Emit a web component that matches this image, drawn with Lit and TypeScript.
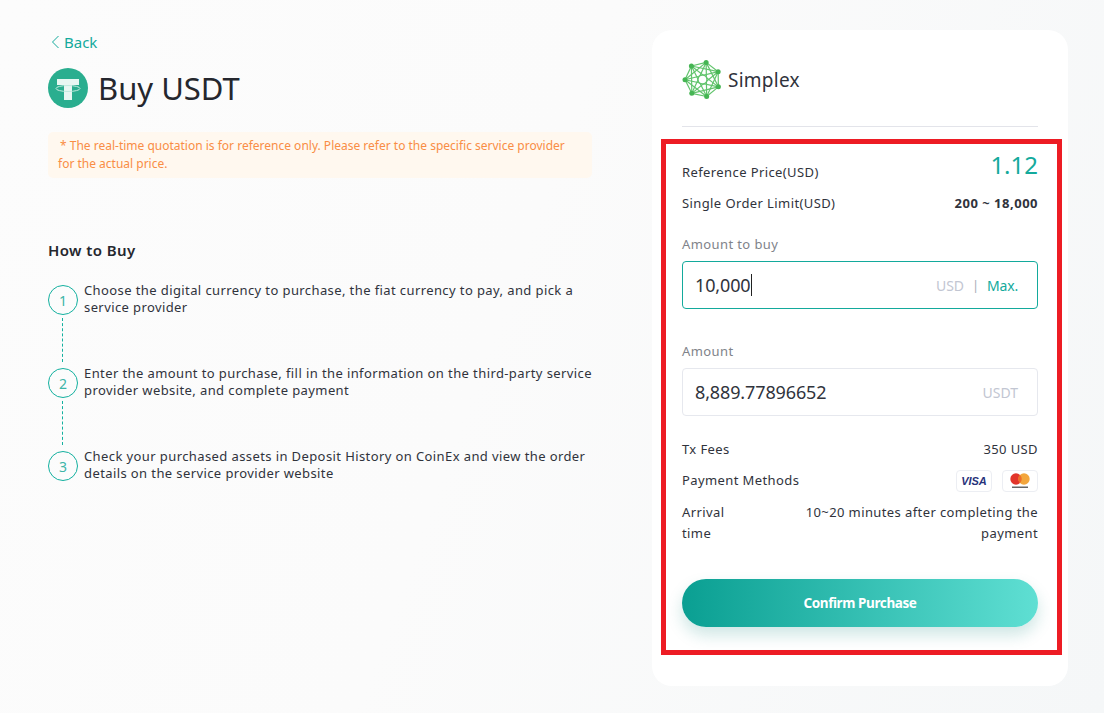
import { LitElement, html, css, svg } from "lit";
import { customElement } from "lit/decorators.js";

const pts: [number, number][] = [];
for (let i = 0; i < 7; i++) {
  const a = (-78 + i * (360 / 7)) * Math.PI / 180;
  pts.push([20 + 17.5 * Math.cos(a), 20.5 + 17.5 * Math.sin(a)]);
}

@customElement("app-root")
export class AppRoot extends LitElement {
  static styles = css`
    :host { display: block; width: 1104px; height: 713px; overflow: hidden; font-family: "Noto Sans", "Open Sans", sans-serif; color: #30333c; background: linear-gradient(110deg, #fcfcfc 0%, #fbfbfb 45%, #f5f7f8 100%); font-size: 13px; letter-spacing: .4px; }
    .page { display: flex; align-items: flex-start; padding: 30px 36px 0 48px; gap: 60px; }
    .left { width: 544px; }
    .back { display: flex; align-items: center; gap: 4px; padding: 2px 0 0 3px; height: 20px; color: #13aa9c; font-size: 15px; letter-spacing: 0; }
    .title { display: flex; align-items: center; gap: 10px; margin-top: 16px; height: 40px; font-size: 31px; letter-spacing: 0; color: #25272e; }
    .notice { margin-top: 24px; padding: 5px 10px; height: 46px; box-sizing: border-box; border-radius: 5px; background: #fff8ef; color: #f98d45; font-size: 12px; line-height: 18px; letter-spacing: 0; text-indent: 2px; }
    h2 { margin: 62px 0 0; font-size: 15px; font-weight: 600; line-height: 20px; color: #25272e; }
    .steps { margin-top: 22px; }
    .step { display: flex; gap: 6px; height: 83px; position: relative; line-height: 17px; }
    .step:last-child { height: auto; }
    .num { flex: none; margin-top: 3px; width: 30px; height: 30px; box-sizing: border-box; border: 1px solid #13b09f; border-radius: 50%; color: #3db5a8; display: flex; align-items: center; justify-content: center; font-size: 14px; letter-spacing: 0; }
    .line { position: absolute; left: 14px; top: 36px; height: 44px; border-left: 1px dashed #13b09f; }
    .card { width: 416px; height: 656px; box-sizing: border-box; background: #fff; border-radius: 20px; padding: 0 30px; position: relative; }
    .brand { display: flex; align-items: center; gap: 5px; height: 97px; padding-top: 3px; box-sizing: border-box; border-bottom: 1px solid #e3e4ea; font-size: 19px; letter-spacing: .25px; }
    .row { display: flex; justify-content: space-between; align-items: center; }
    .price { margin-top: 23px; height: 30px; align-items: flex-end; }
    .price .ref { position: relative; top: 1px; }
    .big { color: #13aa9c; font-size: 24px; line-height: 30px; letter-spacing: 0; }
    .limit { height: 26px; margin-top: 10px; }
    .limit b { font-weight: 700; letter-spacing: .5px; }
    .label { color: #80838a; margin-top: 19px; line-height: 18px; }
    .field { margin-top: 8px; height: 48px; box-sizing: border-box; border: 1px solid #e6e8ee; border-radius: 4px; display: flex; align-items: center; padding: 0 19px 0 12px; font-size: 18px; letter-spacing: -0.13px; }
    .field.on { border-color: #13aa9c; }
    .caret { width: 1px; height: 22px; background: #222; }
    .grow { flex: 1; }
    .unit { color: #c2c6d2; font-size: 14px; letter-spacing: -0.02px; }
    .sep { color: #a9adb8; margin: 0 8px 0 8px; font-size: 13px; }
    .max { color: #13aa9c; font-size: 14px; letter-spacing: -0.2px; }
    .label.second { margin-top: 33px; }
    .fees { margin-top: 24px; height: 18px; }
    .methods { margin-top: 10px; height: 24px; }
    .pays { display: flex; gap: 10px; padding-top: 2px; }
    .pay { width: 36px; height: 22px; box-sizing: border-box; border: 1px solid #eceef3; border-radius: 4px; display: flex; align-items: center; justify-content: center; }
    .visa { font: italic 700 11px "Liberation Sans", sans-serif; color: #27327a; letter-spacing: -0.1px; }
    .arrival { margin-top: 10px; display: flex; justify-content: space-between; line-height: 21px; }
    .arrival .a { width: 60px; }
    .arrival .b { width: 250px; text-align: right; }
    .btn { margin-top: 35px; height: 48px; border-radius: 24px; background: linear-gradient(90deg, #0a9f92, #5fdfd3); box-shadow: 0 8px 16px rgba(10, 130, 120, .2); color: #fff; font-weight: 700; font-size: 13.5px; letter-spacing: -0.4px; display: flex; align-items: center; justify-content: center; }
    .mark { position: absolute; left: 9px; top: 109px; width: 401px; height: 516px; box-sizing: border-box; border: 5px solid #ed1c24; pointer-events: none; }
  `;

  render() {
    const lines = [];
    for (let i = 0; i < 7; i++) for (let j = i + 1; j < 7; j++) lines.push(svg`<line x1=${pts[i][0]} y1=${pts[i][1]} x2=${pts[j][0]} y2=${pts[j][1]} />`);
    return html`<div class="page">
      <section class="left">
        <div class="back">
          <svg width="9" height="14" viewBox="0 0 9 14" fill="none" stroke="#13aa9c"><path d="M7.500 1 1.500 7l6 6" /></svg>
          Back
        </div>
        <div class="title">
          <svg width="40" height="40" viewBox="0 0 40 40">
            <circle cx="20" cy="20" r="20" fill="#2aae8f" />
            <path d="M9 11h22v6h-7v15h-8V17H9z" fill="#e8f7f2" />
            <ellipse cx="20" cy="20.500" rx="12" ry="3" fill="none" stroke="#c2ebdf" stroke-width="1" />
          </svg>
          Buy USDT
        </div>
        <div class="notice">* The real-time quotation is for reference only. Please refer to the specific service provider for the actual price.</div>
        <h2>How to Buy</h2>
        <div class="steps">
          <div class="step"><span class="num">1</span><span class="line"></span><span>Choose the digital currency to purchase, the fiat currency to pay, and pick a service provider</span></div>
          <div class="step"><span class="num">2</span><span class="line"></span><span>Enter the amount to purchase, fill in the information on the third-party service provider website, and complete payment</span></div>
          <div class="step"><span class="num">3</span><span>Check your purchased assets in Deposit History on CoinEx and view the order details on the service provider website</span></div>
        </div>
      </section>
      <section class="card">
        <div class="brand">
          <svg width="41" height="41" viewBox="0 0 40 41">
            <g stroke="#62c46d" stroke-width="1.200" fill="none">${lines}</g>
            <circle cx="20" cy="20.500" r="4.500" fill="#fff" stroke="#62c46d" stroke-width="1.400" />
            <g fill="#45b553">${pts.map((p) => svg`<circle cx=${p[0]} cy=${p[1]} r="2.500" />`)}</g>
          </svg>
          Simplex
        </div>
        <div class="row price"><span class="ref">Reference Price(USD)</span><span class="big">1.12</span></div>
        <div class="row limit"><span>Single Order Limit(USD)</span><b>200 ~ 18,000</b></div>
        <div class="label">Amount to buy</div>
        <div class="field on"><span>10,000</span><span class="caret"></span><span class="grow"></span><span class="unit">USD</span><span class="sep">|</span><span class="max">Max.</span></div>
        <div class="label second">Amount</div>
        <div class="field"><span>8,889.77896652</span><span class="grow"></span><span class="unit">USDT</span></div>
        <div class="row fees"><span>Tx Fees</span><span>350 USD</span></div>
        <div class="row methods"><span>Payment Methods</span>
          <span class="pays">
            <span class="pay"><span class="visa">VISA</span></span>
            <span class="pay"><svg width="22" height="18" viewBox="0 0 22 18"><circle cx="7" cy="7" r="5.700" fill="#e2352b" /><circle cx="15" cy="7" r="5.700" fill="#f3a63c" /><path d="M11 2.900a5.700 5.700 0 0 1 0 8.200 5.700 5.700 0 0 1 0-8.200z" fill="#ee6d2b" /><rect x="3" y="14.500" width="16" height="1.500" fill="#666" /></svg></span>
          </span>
        </div>
        <div class="arrival"><span class="a">Arrival time</span><span class="b">10~20 minutes after completing the payment</span></div>
        <div class="btn">Confirm Purchase</div>
        <div class="mark"></div>
      </section>
    </div>`;
  }
}
